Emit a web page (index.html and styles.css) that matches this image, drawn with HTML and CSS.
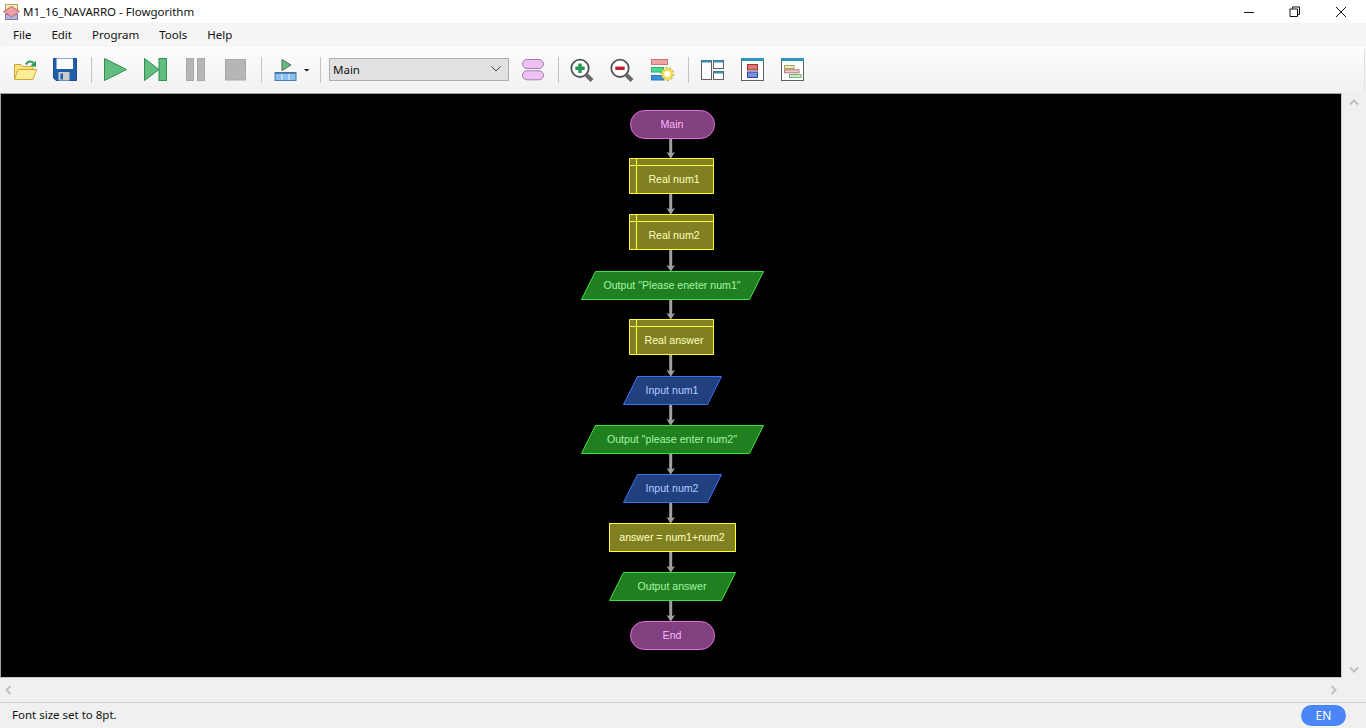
FILE: index.html
```html
<!DOCTYPE html>
<html lang="en">
  <head>
    <meta charset="UTF-8" />
    <meta name="viewport" content="width=device-width, initial-scale=1.0" />
    <title>M1_16_NAVARRO - Flowgorithm</title>
    <link rel="stylesheet" href="styles.css">
  </head>
  <body>
    <header id="titlebar">
      <svg class="app-icon" width="17" height="18" viewBox="0 0 17 18">
        <rect x="2.5" y="1.5" width="12" height="6" fill="#f4ecb0" stroke="#b0a468" />
        <rect x="2.5" y="11.5" width="12" height="5" fill="#b8b4e4" stroke="#7c78a8" />
        <polygon points="0.5,8.5 8.5,3.5 16.5,8.5 8.5,14" fill="#f0a0a8" stroke="#b06870" />
      </svg>
      <span class="title-text">M1_16_NAVARRO - Flowgorithm</span>
      <div class="win-buttons">
        <span class="win-btn"><svg width="12" height="12" viewBox="0 0 12 12"><path d="M1 6.5H11" class="win-glyph" /></svg></span>
        <span class="win-btn"><svg width="12" height="12" viewBox="0 0 12 12"><path d="M3.5 2.5V1H10.5V8.5H8.5M1 3H8.5V10.5H1Z" class="win-glyph" /></svg></span>
        <span class="win-btn"><svg width="12" height="12" viewBox="0 0 12 12"><path d="M1 1L11 11M11 1L1 11" class="win-glyph" /></svg></span>
      </div>
    </header>

    <nav id="menubar">
      <span>File</span>
      <span>Edit</span>
      <span>Program</span>
      <span>Tools</span>
      <span>Help</span>
    </nav>

    <div id="toolbar">
      <button class="tool">
        <svg width="24" height="24" viewBox="0 0 24 24">
          <path d="M1.5 21.5V6.5H8L10 8.5H20V11.5" fill="#fbe27c" stroke="#c9a93c" />
          <path d="M1.5 21.5L5 11.5H23.5L20 21.5Z" fill="#fdec96" stroke="#c9a93c" />
          <path d="M13 6.5C14.5 3 18 2.5 20.5 5" fill="none" stroke="#2a9a55" stroke-width="2" />
          <polygon points="23,3 23,9 17.5,7.5" fill="#2a9a55" />
        </svg>
      </button>
      <button class="tool">
        <svg width="24" height="24" viewBox="0 0 24 24">
          <path d="M0.5 0.5H23.5V22.5H3L0.5 20Z" fill="#1f5fa8" stroke="#1c5090" />
          <rect x="3.5" y="0.5" width="16.5" height="10.5" fill="#fbfbfb" />
          <rect x="5.5" y="14" width="11" height="8.5" fill="#c8ccd0" />
          <rect x="7.5" y="15.5" width="2.5" height="6" fill="#1f5fa8" />
        </svg>
      </button>
      <span class="sep"></span>
      <button class="tool">
        <svg width="24" height="24" viewBox="0 0 24 24">
          <polygon points="1.5,0.5 23.5,11.5 1.5,22.5" fill="#62bd80" stroke="#2f8f52" />
        </svg>
      </button>
      <button class="tool">
        <svg width="24" height="24" viewBox="0 0 24 24">
          <polygon points="1.5,0.5 16,11.5 1.5,22.5" fill="#62bd80" stroke="#2f8f52" />
          <rect x="16" y="0.5" width="7.5" height="22" fill="#62bd80" stroke="#2f8f52" />
        </svg>
      </button>
      <button class="tool">
        <svg width="24" height="24" viewBox="0 0 24 24">
          <rect x="3.5" y="0.5" width="7" height="22" fill="#b6b6b6" stroke="#a8a8a8" />
          <rect x="14.5" y="0.5" width="7" height="22" fill="#b6b6b6" stroke="#a8a8a8" />
        </svg>
      </button>
      <button class="tool">
        <svg width="24" height="24" viewBox="0 0 24 24">
          <rect x="2.5" y="1.5" width="20" height="20.5" fill="#b6b6b6" stroke="#a8a8a8" />
        </svg>
      </button>
      <span class="sep"></span>
      <button class="tool tool-run">
        <svg width="49" height="24" viewBox="0 0 49 24">
          <polygon points="17,1.5 26,7 17,12.5" fill="#62bd80" stroke="#4c6a58" />
          <rect x="10" y="14.5" width="21" height="8" fill="#8cc0f2" stroke="#4a7ea8" />
          <path d="M17 15V22M24 15V22" stroke="#e4f0fa" />
          <path d="M10 15H31" stroke="#3a7098" stroke-width="1.500" />
          <polygon points="39,11 44.500,11 41.700,13.500" fill="#111" />
        </svg>
      </button>
      <span class="sep"></span>
      <div class="func-select">
        <span>Main</span>
        <svg width="12" height="8" viewBox="0 0 12 8"><path d="M1.500 1.500L6 6L10.500 1.500" fill="none" stroke="#444" /></svg>
      </div>
      <button class="tool">
        <svg width="24" height="24" viewBox="0 0 24 24">
          <rect x="2.500" y="1.500" width="21" height="9" rx="4.500" fill="#efc0f6" stroke="#a080a8" />
          <rect x="2.500" y="12.800" width="21" height="9" rx="4.500" fill="#efc0f6" stroke="#a080a8" />
        </svg>
      </button>
      <span class="sep"></span>
      <button class="tool">
        <svg width="24" height="24" viewBox="0 0 24 24">
          <path d="M16.500 17L22 22.500" stroke="#666" stroke-width="4" />
          <circle cx="10" cy="10.300" r="8.700" fill="#fff" stroke="#555" stroke-width="1.800" />
          <path d="M10 5.500V15M5.300 10.300H14.700" stroke="#27994f" stroke-width="3.500" />
        </svg>
      </button>
      <button class="tool">
        <svg width="24" height="24" viewBox="0 0 24 24">
          <path d="M16.500 17L22 22.500" stroke="#666" stroke-width="4" />
          <circle cx="10" cy="10.300" r="8.700" fill="#fff" stroke="#555" stroke-width="1.800" />
          <path d="M5.300 10.300H14.700" stroke="#bd2233" stroke-width="3.500" />
        </svg>
      </button>
      <button class="tool">
        <svg width="24" height="24" viewBox="0 0 24 24">
          <rect x="1.500" y="1.500" width="16" height="5" fill="#f2a2a2" stroke="#c07a7a" />
          <rect x="1.500" y="9.500" width="12" height="4.500" fill="#45dc94" stroke="#2fae72" />
          <rect x="1.500" y="17.500" width="12" height="4.500" fill="#3d8fe0" stroke="#2c70b8" />
          <circle cx="17.300" cy="16" r="4.500" fill="#fff" stroke="#ecdc50" stroke-width="3" />
          <circle cx="17.300" cy="16" r="6.500" fill="none" stroke="#a09238" stroke-dasharray="2 2" />
        </svg>
      </button>
      <span class="sep"></span>
      <button class="tool tool-pane">
        <svg width="24" height="24" viewBox="0 0 24 24">
          <rect x="0.500" y="2.500" width="10" height="19" fill="#fff" stroke="#606060" />
          <rect x="12.500" y="2.500" width="10" height="8" fill="#fff" stroke="#606060" />
          <rect x="12.500" y="13.500" width="10" height="8" fill="#fff" stroke="#606060" />
          <path d="M1 3.500H10M13 3.500H22M13 14.500H22" stroke="#2f94bc" stroke-width="2" />
        </svg>
      </button>
      <button class="tool">
        <svg width="24" height="24" viewBox="0 0 24 24">
          <rect x="0.500" y="0.500" width="22" height="22" fill="#fff" stroke="#606060" />
          <path d="M0 1.500H23" stroke="#2f94bc" stroke-width="3" />
          <rect x="6.500" y="6.500" width="10" height="5.500" fill="#d87878" stroke="#a82a2a" />
          <rect x="6.500" y="14" width="10" height="5.500" fill="#7890d8" stroke="#2a48a0" />
        </svg>
      </button>
      <button class="tool">
        <svg width="24" height="24" viewBox="0 0 24 24">
          <rect x="0.500" y="0.500" width="22" height="22" fill="#fff" stroke="#606060" />
          <path d="M0 1.500H23" stroke="#2f94bc" stroke-width="3" />
          <rect x="3.500" y="7.500" width="9.500" height="3" fill="#f0eec0" stroke="#a8a464" />
          <rect x="3.500" y="11.800" width="14.500" height="3" fill="#f4c8c8" stroke="#b07878" />
          <rect x="8.500" y="16.500" width="11.500" height="3" fill="#c8ecc8" stroke="#78b078" />
        </svg>
      </button>
      <span class="grip"></span>
    </div>

    <main id="workspace">
      <div id="canvas">
        <svg id="chart" width="1340" height="583" viewBox="1 94 1340 583">
          <defs>
            <polygon id="head" points="666.500,-6 670.700,-4.500 675,-6 671.200,0 670.200,0" fill="#a0a0a0" />
          </defs>

          <path class="flow" d="M670.700 139V154M670.700 194V210M670.700 250V267M670.700 300V315M670.700 355V372M670.700 405V421M670.700 454V470M670.700 503V519M670.700 552V568M670.700 601V617" />
          <use href="#head" y="158" />
          <use href="#head" y="214" />
          <use href="#head" y="271" />
          <use href="#head" y="319" />
          <use href="#head" y="376" />
          <use href="#head" y="425" />
          <use href="#head" y="474" />
          <use href="#head" y="523" />
          <use href="#head" y="572" />
          <use href="#head" y="621" />

          <rect class="node-term" x="630.500" y="110.500" width="84" height="28" rx="14" />
          <text class="txt-term" x="672" y="128">Main</text>

          <path class="node-decl" d="M629.500 158.500H713.500V193.500H629.500ZM629.500 165.500H713.500M636.500 158.500V193.500" />
          <text class="txt-decl" x="674" y="183">Real num1</text>

          <path class="node-decl" d="M629.500 214.500H713.500V249.500H629.500ZM629.500 221.500H713.500M636.500 214.500V249.500" />
          <text class="txt-decl" x="674" y="239">Real num2</text>

          <polygon class="node-out" points="595.500,271.500 763.500,271.500 749.500,299.500 581.500,299.500" />
          <text class="txt-out" x="672" y="289">Output "Please eneter num1"</text>

          <path class="node-decl" d="M629.500 319.500H713.500V354.500H629.500ZM629.500 326.500H713.500M636.500 319.500V354.500" />
          <text class="txt-decl" x="674" y="344">Real answer</text>

          <polygon class="node-in" points="637.500,376.500 721.500,376.500 707.500,404.500 623.500,404.500" />
          <text class="txt-in" x="672" y="394">Input num1</text>

          <polygon class="node-out" points="595.500,425.500 763.500,425.500 749.500,453.500 581.500,453.500" />
          <text class="txt-out" x="672" y="443">Output "please enter num2"</text>

          <polygon class="node-in" points="637.500,474.500 721.500,474.500 707.500,502.500 623.500,502.500" />
          <text class="txt-in" x="672" y="492">Input num2</text>

          <rect class="node-decl" x="609.500" y="523.500" width="126" height="28" />
          <text class="txt-decl" x="672" y="541">answer = num1+num2</text>

          <polygon class="node-out" points="623.500,572.500 735.500,572.500 721.500,600.500 609.500,600.500" />
          <text class="txt-out" x="672" y="590">Output answer</text>

          <rect class="node-term" x="630.500" y="621.500" width="84" height="28" rx="14" />
          <text class="txt-term" x="672" y="639">End</text>
        </svg>
      </div>
      <div id="vscroll">
        <svg width="10" height="8" viewBox="0 0 10 8"><path class="chev" d="M1 6.500L5 2.500L9 6.500" /></svg>
        <svg width="10" height="8" viewBox="0 0 10 8"><path class="chev" d="M1 1.500L5 5.500L9 1.500" /></svg>
      </div>
    </main>

    <div id="hscroll">
      <svg width="8" height="10" viewBox="0 0 8 10"><path class="chev" d="M6.500 1L2.500 5L6.500 9" /></svg>
      <svg width="8" height="10" viewBox="0 0 8 10"><path class="chev" d="M1.500 1L5.500 5L1.500 9" /></svg>
    </div>

    <footer id="statusbar">
      <span class="status-text">Font size set to 8pt.</span>
      <span class="lang-pill">EN</span>
    </footer>
  </body>
</html>
```

FILE: styles.css
```css
* {
  box-sizing: border-box;
}
body {
  margin: 0;
  height: 100vh;
  overflow: hidden;
  display: flex;
  flex-direction: column;
  background-color: #f0f0f0;
  color: #111;
  font-family: "Noto Sans", "Open Sans", sans-serif;
  font-size: 11.5px;
}
svg {
  display: block;
}

#titlebar {
  height: 23px;
  display: flex;
  align-items: center;
  padding-left: 3px;
  background-color: #fff;
}
.title-text {
  margin-left: 3px;
}
.win-buttons {
  margin-left: auto;
  padding-right: 2px;
  display: flex;
}
.win-btn {
  width: 46px;
  display: flex;
  justify-content: center;
}
.win-glyph {
  fill: none;
  stroke: #111;
}

#menubar {
  height: 24px;
  display: flex;
  align-items: center;
  gap: 20px;
  padding: 0 0 2px 13px;
  background-color: #f5f5f5;
}

#toolbar {
  height: 46px;
  display: flex;
  align-items: center;
  padding-left: 5px;
  padding-right: 1px;
  border-top-left-radius: 3px;
  background: linear-gradient(#fdfdfd, #f1f1f1);
}
.tool {
  width: 40px;
  height: 24px;
  padding: 0;
  border: 0;
  background: none;
  display: flex;
  justify-content: center;
}
.tool-run {
  width: 49px;
}
.tool-pane {
  margin-left: 1px;
}
.sep {
  width: 1px;
  height: 26px;
  margin: 0 3px 0 6px;
  background-color: #c4c4c4;
}
.grip {
  width: 1px;
  height: 42px;
  margin-left: auto;
  background-color: #e2e2e2;
}
.func-select {
  width: 180px;
  height: 23px;
  margin: 0 3px 1px 5px;
  padding: 0 6px 1px 3px;
  display: flex;
  align-items: center;
  justify-content: space-between;
  background-color: #e1e1e1;
  border: 1px solid #adadad;
}

#workspace {
  flex: 1;
  min-height: 0;
  display: flex;
}
#canvas {
  width: 1342px;
  background-color: #000;
  border: 1px solid #a0a0a0;
  border-bottom-color: #c8c8c8;
  border-right-color: #c8c8c8;
}
#vscroll {
  flex: 1;
  padding: 5px 0 4px;
  display: flex;
  flex-direction: column;
  align-items: center;
  justify-content: space-between;
}
#hscroll {
  height: 24px;
  padding: 0 28px 0 4px;
  display: flex;
  align-items: center;
  justify-content: space-between;
}
.chev {
  fill: none;
  stroke: #c0c0c0;
  stroke-width: 2;
}

#statusbar {
  height: 26px;
  padding: 0 20px 0 12px;
  display: flex;
  align-items: center;
  justify-content: space-between;
  border-top: 1px solid #d4d4d4;
}
.status-text {
  margin-bottom: 2px;
}
.lang-pill {
  width: 45px;
  height: 21px;
  border-radius: 11px;
  display: flex;
  align-items: center;
  justify-content: center;
  background-color: #4a86f8;
  color: #fff;
  font-size: 12px;
}

/* flowchart */
#chart text {
  font-family: "Liberation Sans", sans-serif;
  font-size: 10.6px;
  text-anchor: middle;
}
.flow {
  fill: none;
  stroke: #a0a0a0;
  stroke-width: 3;
}
.node-term {
  fill: #824080;
  stroke: #e070e0;
}
.node-decl {
  fill: #808020;
  stroke: #ffff40;
}
.node-out {
  fill: #208020;
  stroke: #40e040;
}
.node-in {
  fill: #204080;
  stroke: #4070f0;
}
#chart .txt-term {
  fill: #f8b8f8;
}
#chart .txt-decl {
  fill: #ffffc0;
}
#chart .txt-out {
  fill: #a4f4a4;
}
#chart .txt-in {
  fill: #b4ccff;
}
```
